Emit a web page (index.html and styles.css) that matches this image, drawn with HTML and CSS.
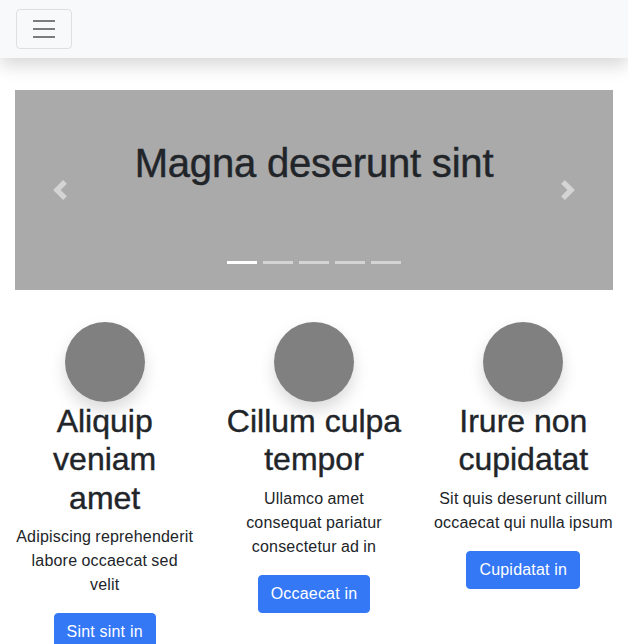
FILE: index.html
```html
<!DOCTYPE html>
<html lang="en">
<head>
<meta charset="utf-8">
<title>Carousel page</title>
<link rel="stylesheet" href="styles.css">
</head>
<body>
<nav class="navbar">
  <button class="toggler" type="button" aria-label="Toggle navigation">
    <svg class="toggler-icon" width="30" height="30" viewBox="0 0 30 30"><path d="M4 7h22M4 15h22M4 23h22" stroke="rgba(0,0,0,0.5)" stroke-width="2" stroke-linecap="butt" fill="none"/></svg>
  </button>
</nav>
<main class="container">
  <section class="carousel">
    <h1 class="slide-title">Magna deserunt sint</h1>
    <a class="control control-prev" href="#" aria-label="Previous">
      <svg width="20" height="20" viewBox="0 0 8 8"><path fill="#fff" d="M5.25 0l-4 4 4 4 1.5-1.5L4.25 4l2.5-2.5L5.25 0z"/></svg>
    </a>
    <a class="control control-next" href="#" aria-label="Next">
      <svg width="20" height="20" viewBox="0 0 8 8"><path fill="#fff" d="M2.75 0l-1.5 1.5L3.75 4l-2.5 2.5L2.75 8l4-4-4-4z"/></svg>
    </a>
    <ol class="indicators">
      <li class="active"></li>
      <li></li>
      <li></li>
      <li></li>
      <li></li>
    </ol>
  </section>
  <section class="row">
    <div class="col">
      <div class="avatar"></div>
      <h2>Aliquip veniam amet</h2>
      <p>Adipiscing reprehenderit labore occaecat sed velit</p>
      <a class="btn" href="#">Sint sint in</a>
    </div>
    <div class="col">
      <div class="avatar"></div>
      <h2>Cillum culpa tempor</h2>
      <p>Ullamco amet consequat pariatur consectetur ad in</p>
      <a class="btn" href="#">Occaecat in</a>
    </div>
    <div class="col">
      <div class="avatar"></div>
      <h2>Irure non cupidatat</h2>
      <p>Sit quis deserunt cillum occaecat qui nulla ipsum</p>
      <a class="btn" href="#">Cupidatat in</a>
    </div>
  </section>
</main>
</body>
</html>
```
FILE: styles.css
```css
* { box-sizing: border-box; }
html, body { margin: 0; padding: 0; }
body {
  font-family: "Liberation Sans", Arial, sans-serif;
  font-size: 16px;
  line-height: 1.5;
  color: #212529;
  background: #fff;
  overflow: hidden;
}
.navbar {
  display: flex;
  align-items: center;
  height: 58px;
  padding: 0 16px;
  background: #f8f9fa;
  box-shadow: 0 8px 16px rgba(0,0,0,0.15);
  position: relative;
  z-index: 1;
}
.toggler {
  display: flex;
  align-items: center;
  justify-content: center;
  width: 56px;
  height: 40px;
  padding: 4px 12px;
  background: transparent;
  border: 1px solid rgba(0,0,0,0.1);
  border-radius: 4px;
}
.toggler-icon { display: block; }
.container { padding: 0 15px; }
.carousel {
  position: relative;
  margin-top: 32px;
  height: 200px;
  background: #aaa;
  padding-top: 49px;
  text-align: center;
}
.slide-title {
  margin: 0;
  font-size: 40px;
  line-height: 1.2;
  font-weight: 500;
  color: #212529;
  letter-spacing: -0.2px;
  -webkit-text-stroke: 0.45px #212529;
}
.control {
  position: absolute;
  top: 0;
  bottom: 0;
  width: 15%;
  display: flex;
  align-items: center;
  justify-content: center;
  opacity: 0.5;
}
.control svg { display: block; }
.control-prev { left: 0; }
.control-next { right: 0; }
.indicators {
  position: absolute;
  left: 0;
  right: 0;
  bottom: 16px;
  margin: 0;
  padding: 0;
  list-style: none;
  display: flex;
  justify-content: center;
}
.indicators li {
  width: 30px;
  height: 23px;
  margin: 0 3px;
  border-top: 10px solid transparent;
  border-bottom: 10px solid transparent;
  background: #fff;
  background-clip: padding-box;
  opacity: 0.5;
}
.indicators li.active { opacity: 1; }
.row {
  display: flex;
  margin: 32px -15px 0;
}
.col {
  flex: 1 1 0;
  padding: 0 15px;
  text-align: center;
}
.avatar {
  width: 80px;
  height: 80px;
  margin: 0 auto;
  border-radius: 50%;
  background: #808080;
  box-shadow: 0 8px 16px rgba(0,0,0,0.15);
}
h2 {
  margin: 0 0 8px;
  font-size: 32px;
  line-height: 1.2;
  font-weight: 500;
  -webkit-text-stroke: 0.4px #212529;
}
p {
  margin: 0 0 16px;
  letter-spacing: 0.2px;
  word-spacing: -0.4px;
}
.btn {
  display: inline-block;
  padding: 6px 12px;
  font-size: 16px;
  line-height: 24px;
  letter-spacing: 0.2px;
  color: #fff;
  background: #3478f6;
  border: 1px solid #3478f6;
  border-radius: 4px;
  text-decoration: none;
}
```
